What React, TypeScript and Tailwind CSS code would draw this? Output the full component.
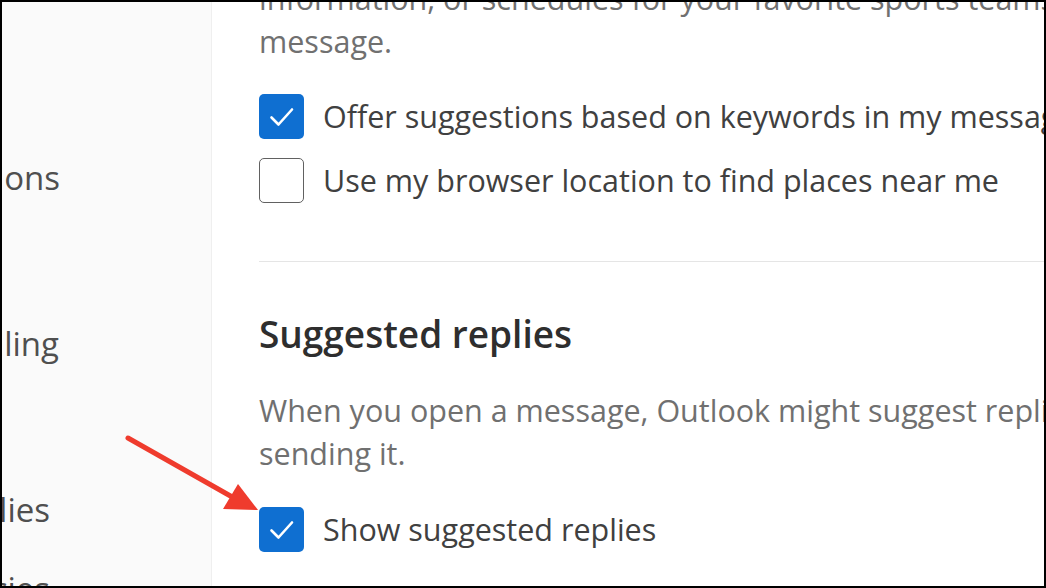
const font = "font-['Open_Sans','Noto_Sans',sans-serif]";

function Box({ checked }: { checked: boolean }) {
  if (checked) {
    return (
      <span className="w-[45px] h-[45px] shrink-0 rounded-[5px] bg-[#0f6fd1] flex items-center justify-center">
        <svg width="45" height="45" viewBox="0 0 45 45" fill="none">
          <path d="M12.5 23.5 L19.5 30.5 L33 15.5" stroke="#fff" strokeWidth="2.6" strokeLinecap="round" strokeLinejoin="round" />
        </svg>
      </span>
    );
  }
  return <span className="w-[45px] h-[45px] shrink-0 rounded-[5px] border-[1.5px] border-[#616161] bg-white" />;
}

function Row({ checked, label }: { checked: boolean; label: string }) {
  return (
    <label className="h-[64px] flex items-center gap-[19px] whitespace-nowrap">
      <Box checked={checked} />
      <span className="text-[#404040]">{label}</span>
    </label>
  );
}

// sidebar labels are cut off by the left edge, only their endings show
const navItems = [
  { label: "Smart suggestions", cls: "w-[58px] mt-[154px]" },
  { label: "Message handling", cls: "w-[57px] mt-[123px]" },
  { label: "Automatic replies", cls: "w-[48px] mt-[123px]" },
  { label: "Retention policies", cls: "w-[48px] mt-[36px]" },
];

export default function App() {
  return (
    <div className={`relative w-[1046px] h-[588px] border-2 border-black overflow-hidden flex bg-white ${font} text-[30.5px] leading-[43px]`}>
      <aside className="w-[210px] shrink-0 bg-[#fafafa] border-r border-[#efefef] flex flex-col text-[33px]">
        {navItems.map((item) => (
          <div key={item.label} className={`${item.cls} h-[43px] shrink-0 flex justify-end overflow-hidden text-[#4f4f4f]`}>
            <span className="shrink-0 whitespace-nowrap">{item.label}</span>
          </div>
        ))}
      </aside>

      <main className="flex-1 min-w-0 pl-[47px] overflow-hidden">
        <div className="mt-[-25px] text-[#707070] whitespace-nowrap">
          <div>information, or schedules for your favorite sports teams based on your</div>
          <div>message.</div>
        </div>

        <div className="mt-[21px]">
          <Row checked label="Offer suggestions based on keywords in my messages" />
          <Row checked={false} label="Use my browser location to find places near me" />
        </div>

        <div className="mt-[49px] h-px bg-[#e5e5e5]" />

        <h2 className="mt-[50px] text-[37px] leading-[44px] font-semibold text-[#2e2e2e] whitespace-nowrap">
          Suggested replies
        </h2>

        <div className="mt-[33px] text-[#707070] whitespace-nowrap">
          <div>When you open a message, Outlook might suggest replies to use before</div>
          <div>sending it.</div>
        </div>

        <div className="mt-[22px]">
          <Row checked label="Show suggested replies" />
        </div>
      </main>

      <svg className="absolute left-[-2px] top-[-2px] pointer-events-none" width="1046" height="588" viewBox="0 0 1046 588">
        <line x1="128" y1="438" x2="234" y2="498" stroke="#ef3b2d" strokeWidth="5" strokeLinecap="round" />
        <polygon points="258,510 223,509 238,484" fill="#ef3b2d" />
      </svg>
    </div>
  );
}
